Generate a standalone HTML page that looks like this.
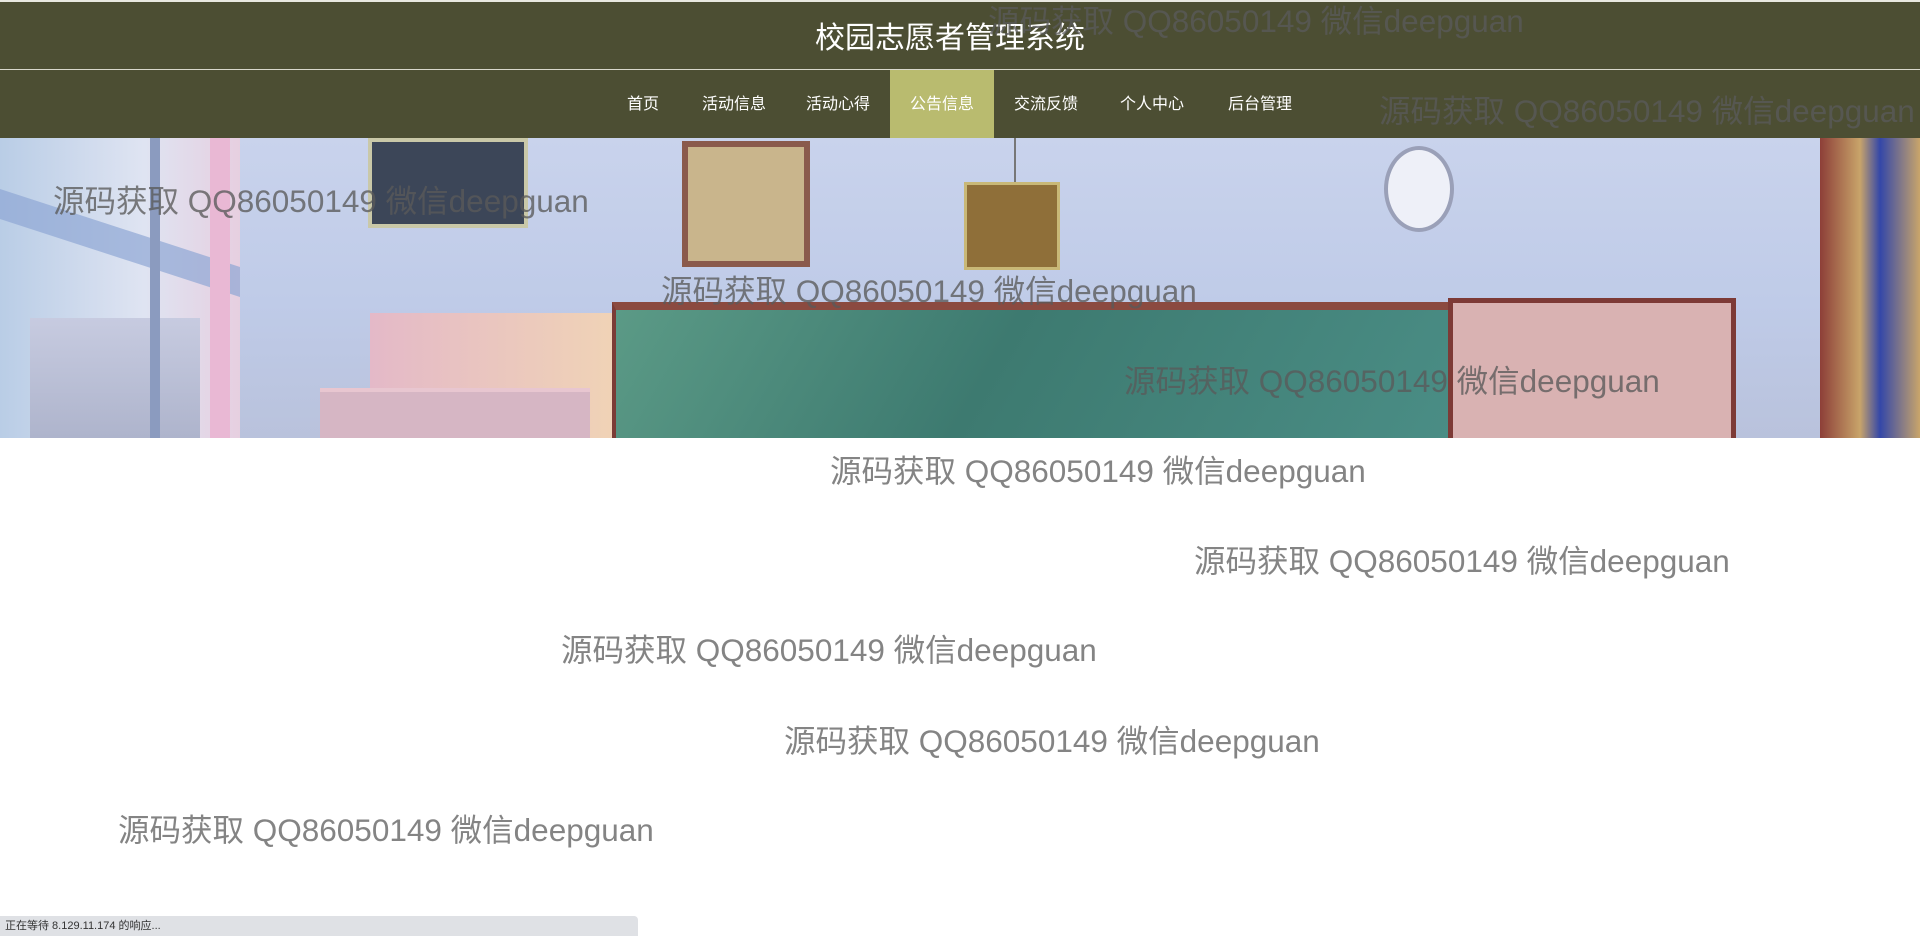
<!DOCTYPE html>
<html><head><meta charset="utf-8"><style>
*{margin:0;padding:0;box-sizing:border-box}
body{width:1920px;height:936px;overflow:hidden;background:#fff;font-family:"Liberation Sans","Noto Sans CJK SC",sans-serif;position:relative}
.top{position:absolute;left:0;top:0;width:1920px;height:69px;background:#4c4e33;border-top:2px solid #e8e8e0}
.top h1{position:absolute;left:0;width:1900px;text-align:center;top:11px;font-size:30px;font-weight:normal;color:#fff;letter-spacing:0}
.line{position:absolute;left:0;top:69px;width:1920px;height:1px;background:#d8d8cc}
.nav{position:absolute;left:0;top:70px;width:1920px;height:68px;background:#4c4e33}
.nav a{position:absolute;top:0;height:68px;line-height:70px;width:104px;text-align:center;color:#fff;font-size:16px;text-decoration:none}
.nav a.on{background:#b9bb6f}
.banner{position:absolute;left:0;top:138px;width:1920px;height:300px;overflow:hidden;background:linear-gradient(180deg,#c9d3ec 0%,#bfcbe8 55%,#b9c2dc 100%)}
.wm{position:absolute;font-size:31.5px;color:rgba(90,90,90,.78);white-space:nowrap;font-family:"Liberation Sans","Noto Sans CJK SC",sans-serif}
.status{position:absolute;left:0;top:916px;width:638px;height:20px;background:#dfe1e5;border-top-right-radius:4px;font-size:11px;color:#333;line-height:20px;padding-left:5px}
</style></head><body>
<div class="top"><h1>校园志愿者管理系统</h1></div>
<div class="line"></div>
<div class="nav">
<a style="left:591px">首页</a>
<a style="left:682px">活动信息</a>
<a style="left:786px">活动心得</a>
<a class="on" style="left:890px">公告信息</a>
<a style="left:994px">交流反馈</a>
<a style="left:1100px">个人中心</a>
<a style="left:1208px">后台管理</a>
</div>
<div class="banner">
<div style="position:absolute;left:0;top:0;width:240px;height:300px;background:linear-gradient(90deg,#b9cde6,#dfe4f2 60%,#e6cfe0)"></div>
<div style="position:absolute;left:0;top:90px;width:240px;height:30px;background:#8ea7d4;transform:skewY(18deg);opacity:.7"></div>
<div style="position:absolute;left:30px;top:180px;width:170px;height:120px;background:linear-gradient(180deg,#c7cbe0,#aeb4cc)"></div>
<div style="position:absolute;left:150px;top:0;width:10px;height:300px;background:#8b9bbf"></div>
<div style="position:absolute;left:210px;top:0;width:20px;height:300px;background:#e9b8d4"></div>
<div style="position:absolute;left:368px;top:0;width:160px;height:90px;background:#3c4658;border:4px solid #c9c8a8"></div>
<div style="position:absolute;left:682px;top:3px;width:128px;height:126px;background:#c9b58c;border:6px solid #8a5a4c"></div>
<div style="position:absolute;left:1014px;top:0;width:2px;height:45px;background:#777"></div>
<div style="position:absolute;left:964px;top:44px;width:96px;height:88px;background:#8f6f39;border:3px solid #c9b877"></div>
<div style="position:absolute;left:1384px;top:8px;width:70px;height:86px;border-radius:50%;background:#eef0f8;border:4px solid #9aa0b8"></div>
<div style="position:absolute;left:370px;top:175px;width:245px;height:125px;background:linear-gradient(90deg,#e4b9c8,#f0d3b6)"></div>
<div style="position:absolute;left:320px;top:250px;width:270px;height:50px;background:#d6b6c4;border-top:4px solid #e8c6d0"></div>
<div style="position:absolute;left:612px;top:164px;width:836px;height:136px;background:linear-gradient(120deg,#5b9a86,#3d7a70 45%,#4a8d85);border-top:8px solid #8b4a40;border-left:4px solid #7b3c36"></div>
<div style="position:absolute;left:1448px;top:160px;width:288px;height:140px;background:#d9b2b2;border:5px solid #7d3a36;border-bottom:none"></div>
<div style="position:absolute;left:1820px;top:0;width:100px;height:300px;background:linear-gradient(90deg,#8d3f38,#c8a46a 40%,#3447a8 60%,#c9a56a)"></div>
</div>
<div class="wm" style="left:988px;top:-4px">源码获取 QQ86050149 微信deepguan</div>
<div class="wm" style="left:1379px;top:86px">源码获取 QQ86050149 微信deepguan</div>
<div class="wm" style="left:53px;top:176px">源码获取 QQ86050149 微信deepguan</div>
<div class="wm" style="left:661px;top:266px">源码获取 QQ86050149 微信deepguan</div>
<div class="wm" style="left:1124px;top:356px">源码获取 QQ86050149 微信deepguan</div>
<div class="wm" style="left:830px;top:446px;color:rgba(110,110,110,.85)">源码获取 QQ86050149 微信deepguan</div>
<div class="wm" style="left:1194px;top:536px;color:rgba(110,110,110,.85)">源码获取 QQ86050149 微信deepguan</div>
<div class="wm" style="left:561px;top:625px;color:rgba(110,110,110,.85)">源码获取 QQ86050149 微信deepguan</div>
<div class="wm" style="left:784px;top:716px;color:rgba(110,110,110,.85)">源码获取 QQ86050149 微信deepguan</div>
<div class="wm" style="left:118px;top:805px;color:rgba(110,110,110,.85)">源码获取 QQ86050149 微信deepguan</div>
<div class="status">正在等待 8.129.11.174 的响应...</div>
</body></html>
